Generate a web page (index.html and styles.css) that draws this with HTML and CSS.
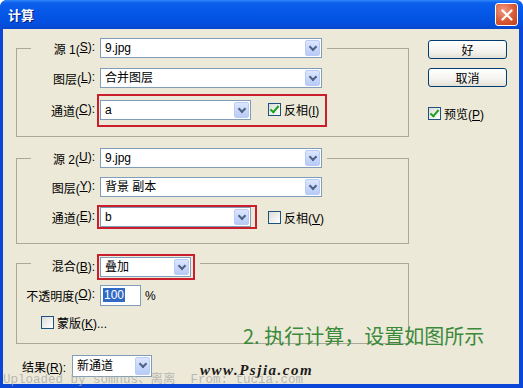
FILE: index.html
```html
<!DOCTYPE html>
<html>
<head>
    <title>计算</title>
    <link rel="stylesheet" href="styles.css">
</head>
<body>
    <div class="window">
        <div class="titlebar">
            <span class="title">计算</span>
            <span class="close">
                <svg width="12" height="12" viewBox="0 0 12 12"><path d="M1.5 1.5 L10.5 10.5 M10.5 1.5 L1.5 10.5" stroke="#fff" stroke-width="2.2" stroke-linecap="round"/></svg>
            </span>
        </div>
        <div class="body">
            <div class="main">
                <fieldset class="group g1">
                    <legend class="row">
                        <label class="lbl">源 1(<u>S</u>):</label>
                        <div class="combo full"><span class="val">9.jpg</span><span class="arrow"></span></div>
                    </legend>
                    <div class="row r2">
                        <label class="lbl">图层(<u>L</u>):</label>
                        <div class="combo full"><span class="val">合并图层</span><span class="arrow"></span></div>
                    </div>
                    <div class="row r3">
                        <label class="lbl">通道(<u>C</u>):</label>
                        <div class="mark m1">
                            <div class="combo short"><span class="val">a</span><span class="arrow"></span></div>
                            <span class="check on"></span><span class="ctext">反相(<u>I</u>)</span>
                        </div>
                    </div>
                </fieldset>

                <fieldset class="group g2">
                    <legend class="row">
                        <label class="lbl">源 2(<u>U</u>):</label>
                        <div class="combo full"><span class="val">9.jpg</span><span class="arrow"></span></div>
                    </legend>
                    <div class="row r2">
                        <label class="lbl">图层(<u>Y</u>):</label>
                        <div class="combo full"><span class="val">背景 副本</span><span class="arrow"></span></div>
                    </div>
                    <div class="row r3">
                        <label class="lbl">通道(<u>E</u>):</label>
                        <div class="mark m2">
                            <div class="combo short"><span class="val">b</span><span class="arrow"></span></div>
                        </div>
                        <span class="check off"></span><span class="ctext">反相(<u>V</u>)</span>
                    </div>
                </fieldset>

                <fieldset class="group g3">
                    <legend class="row">
                        <label class="lbl">混合(<u>B</u>):</label>
                        <div class="mark m3">
                            <div class="combo blend"><span class="val">叠加</span><span class="arrow"></span></div>
                        </div>
                    </legend>
                    <div class="row r-op">
                        <label class="lbl">不透明度(<u>O</u>):</label>
                        <div class="field"><span class="sel">100</span></div>
                        <span class="pct">%</span>
                    </div>
                    <div class="row r-mask">
                        <span class="check off"></span><span class="ctext">蒙版(<u>K</u>)...</span>
                    </div>
                </fieldset>

                <div class="row result">
                    <label class="rlbl">结果(<u>R</u>):</label>
                    <div class="combo res"><span class="val">新通道</span><span class="arrow"></span></div>
                </div>
            </div>

            <div class="side">
                <button class="btn">好</button>
                <button class="btn">取消</button>
                <div class="preview">
                    <span class="check on"></span><span class="ctext">预览(<u>P</u>)</span>
                </div>
            </div>

            <div class="note">2. 执行计算，设置如图所示</div>
            <div class="site">www.Psjia.com</div>
        </div>
        <div class="upload">Uploaded by somnus、离离  From: tucia.com</div>
    </div>
</body>
</html>
```

FILE: styles.css
```css
body {
    margin: 0;
    background: #fff;
}

.window {
    position: relative;
    width: 523px;
    height: 388px;
    background: #0A46D8;
    border-radius: 7px 7px 0 0;
    overflow: hidden;
    font-family: "Liberation Sans", "Noto Sans CJK SC", sans-serif;
    font-size: 12px;
    color: #000;
}

.titlebar {
    height: 29px;
    display: flex;
    align-items: center;
    justify-content: space-between;
    padding: 0 5px 0 8px;
    background: linear-gradient(#2F86F8 0, #0B5FEC 3px, #0558E8 40%, #0350E0 80%, #0846CC 100%);
    box-sizing: border-box;
}

.title {
    color: #fff;
    font-weight: bold;
    font-size: 13px;
    text-shadow: 1px 1px 0 #0A1E80;
    font-family: "Noto Sans CJK SC", sans-serif;
}

.close {
    width: 21px;
    height: 21px;
    border: 1px solid #fff;
    border-radius: 3px;
    background: radial-gradient(circle at 35% 30%, #F09A80, #D95A36 55%, #C23F1C);
    display: flex;
    align-items: center;
    justify-content: center;
}

.body {
    position: relative;
    display: flex;
    height: 355px;
    margin: 0 4px 4px 3px;
    padding: 9px 0 0 13px;
    background: #ECE9D8;
    box-sizing: border-box;
}

.main {
    width: 393px;
}

.side {
    width: 79px;
    margin-left: 19px;
    padding-top: 2px;
    display: flex;
    flex-direction: column;
}

/* group boxes */
.group {
    margin: 0;
    padding: 0 0 9px 14px;
    border: 1px solid #ACA899;
    min-width: 0;
}

.group legend {
    padding: 0 5px 0 0;
}

.g2 {
    margin-top: 11px;
    padding-bottom: 14px;
}

.g3 {
    margin-top: 10px;
    padding-bottom: 14px;
}

.g3 legend {
    height: 18px;
    align-items: flex-start;
}

.g3 legend .lbl {
    line-height: 26px;
}

.row {
    display: flex;
    align-items: center;
    height: 20px;
}

.g1 .r2 { margin-top: 10px; }
.g1 .r3 { margin-top: 6px; height: 33px; }
.g2 .r2 { margin-top: 9px; }
.g2 .r3 { margin-top: 8px; height: 24px; }

.lbl {
    width: 64px;
    flex-shrink: 0;
    display: flex;
    justify-content: flex-end;
    white-space: nowrap;
}

/* red annotation boxes */
.mark {
    display: flex;
    align-items: center;
    margin-left: 2px;
    border: 2px solid #CB1E2C;
    padding: 0 4px 0 1px;
    box-sizing: border-box;
}

.m1 {
    height: 33px;
    padding: 1px 6px 3px 1px;
}

.m1 .check {
    margin-left: 17px;
}

.m2 {
    height: 24px;
}

.m2 + .check {
    margin-left: 11px;
}

.m3 {
    height: 26px;
    padding: 0 2px 0 1px;
}

/* combo boxes */
.combo {
    display: flex;
    height: 20px;
    border: 1px solid #7F9DB9;
    background: #fff;
    box-sizing: border-box;
}

.lbl + .combo {
    margin-left: 5px;
}

.combo .val {
    flex: 1;
    padding-left: 4px;
    line-height: 18px;
    white-space: nowrap;
}

.combo .arrow {
    position: relative;
    width: 15px;
    margin: 1px;
    border: 1px solid #BACCF6;
    border-radius: 2px;
    background: linear-gradient(#DCE6FE, #B8CBF6);
    box-sizing: border-box;
}

.combo .arrow::after {
    content: "";
    position: absolute;
    left: 4px;
    top: 3px;
    width: 4px;
    height: 4px;
    border-right: 2px solid #4D6185;
    border-bottom: 2px solid #4D6185;
    transform: rotate(45deg);
}

.full { width: 222px; }
.short { width: 151px; }
.blend { width: 91px; }
.res { width: 80px; }

/* check boxes */
.check {
    width: 13px;
    height: 13px;
    border: 1px solid #1C5180;
    background: linear-gradient(135deg, #DCDCD6, #fff);
    box-sizing: border-box;
    flex-shrink: 0;
    position: relative;
}

.check.on::after {
    content: "";
    position: absolute;
    left: 3px;
    top: 0;
    width: 3px;
    height: 7px;
    border-right: 2px solid #21A121;
    border-bottom: 2px solid #21A121;
    transform: rotate(40deg);
}

.ctext {
    margin-left: 3px;
    white-space: nowrap;
}

/* opacity and mask */
.r-op {
    margin-top: 13px;
    height: 21px;
}

.r-op .lbl {
    width: 72px;
    margin-left: -8px;
}

.field {
    width: 41px;
    height: 21px;
    margin-left: 5px;
    border: 1px solid #7F9DB9;
    background: #fff;
    box-sizing: border-box;
    padding: 2px 0 0 2px;
}

.sel {
    background: #316AC5;
    color: #fff;
    padding: 0 1px;
}

.pct {
    margin-left: 4px;
}

.r-mask {
    margin-top: 10px;
    height: 13px;
    padding-left: 10px;
}

/* result */
.result {
    margin-top: 11px;
    height: 22px;
    padding-left: 6px;
}

.result .combo {
    height: 22px;
    margin-left: 6px;
}

.result .combo .val {
    line-height: 20px;
}

/* buttons */
.btn {
    height: 19px;
    padding: 0;
    border: 1px solid #003C74;
    border-radius: 3px;
    background: linear-gradient(#fff, #F4F3EE 60%, #E3E0D5);
    font-family: "Noto Sans CJK SC", sans-serif;
    font-size: 12px;
    line-height: 15px;
    color: #000;
}

.btn + .btn {
    margin-top: 9px;
}

.preview {
    display: flex;
    align-items: center;
    margin-top: 18px;
}

/* overlays from the tutorial image */
.note {
    position: absolute;
    left: 240px;
    top: 292px;
    font-family: "Noto Sans CJK SC", sans-serif;
    font-size: 20px;
    color: #3A8A3A;
    white-space: nowrap;
}

.site {
    position: absolute;
    left: 197px;
    top: 333px;
    font-family: "Liberation Serif", serif;
    font-weight: bold;
    font-style: italic;
    font-size: 15px;
    letter-spacing: 1.5px;
    color: #1A1A1A;
}

.upload {
    position: absolute;
    left: 3px;
    top: 374px;
    font-family: "Liberation Mono", "Noto Sans CJK SC", monospace;
    font-size: 12.5px;
    line-height: 13px;
    white-space: pre;
    color: rgba(170, 170, 170, 0.8);
}
```
